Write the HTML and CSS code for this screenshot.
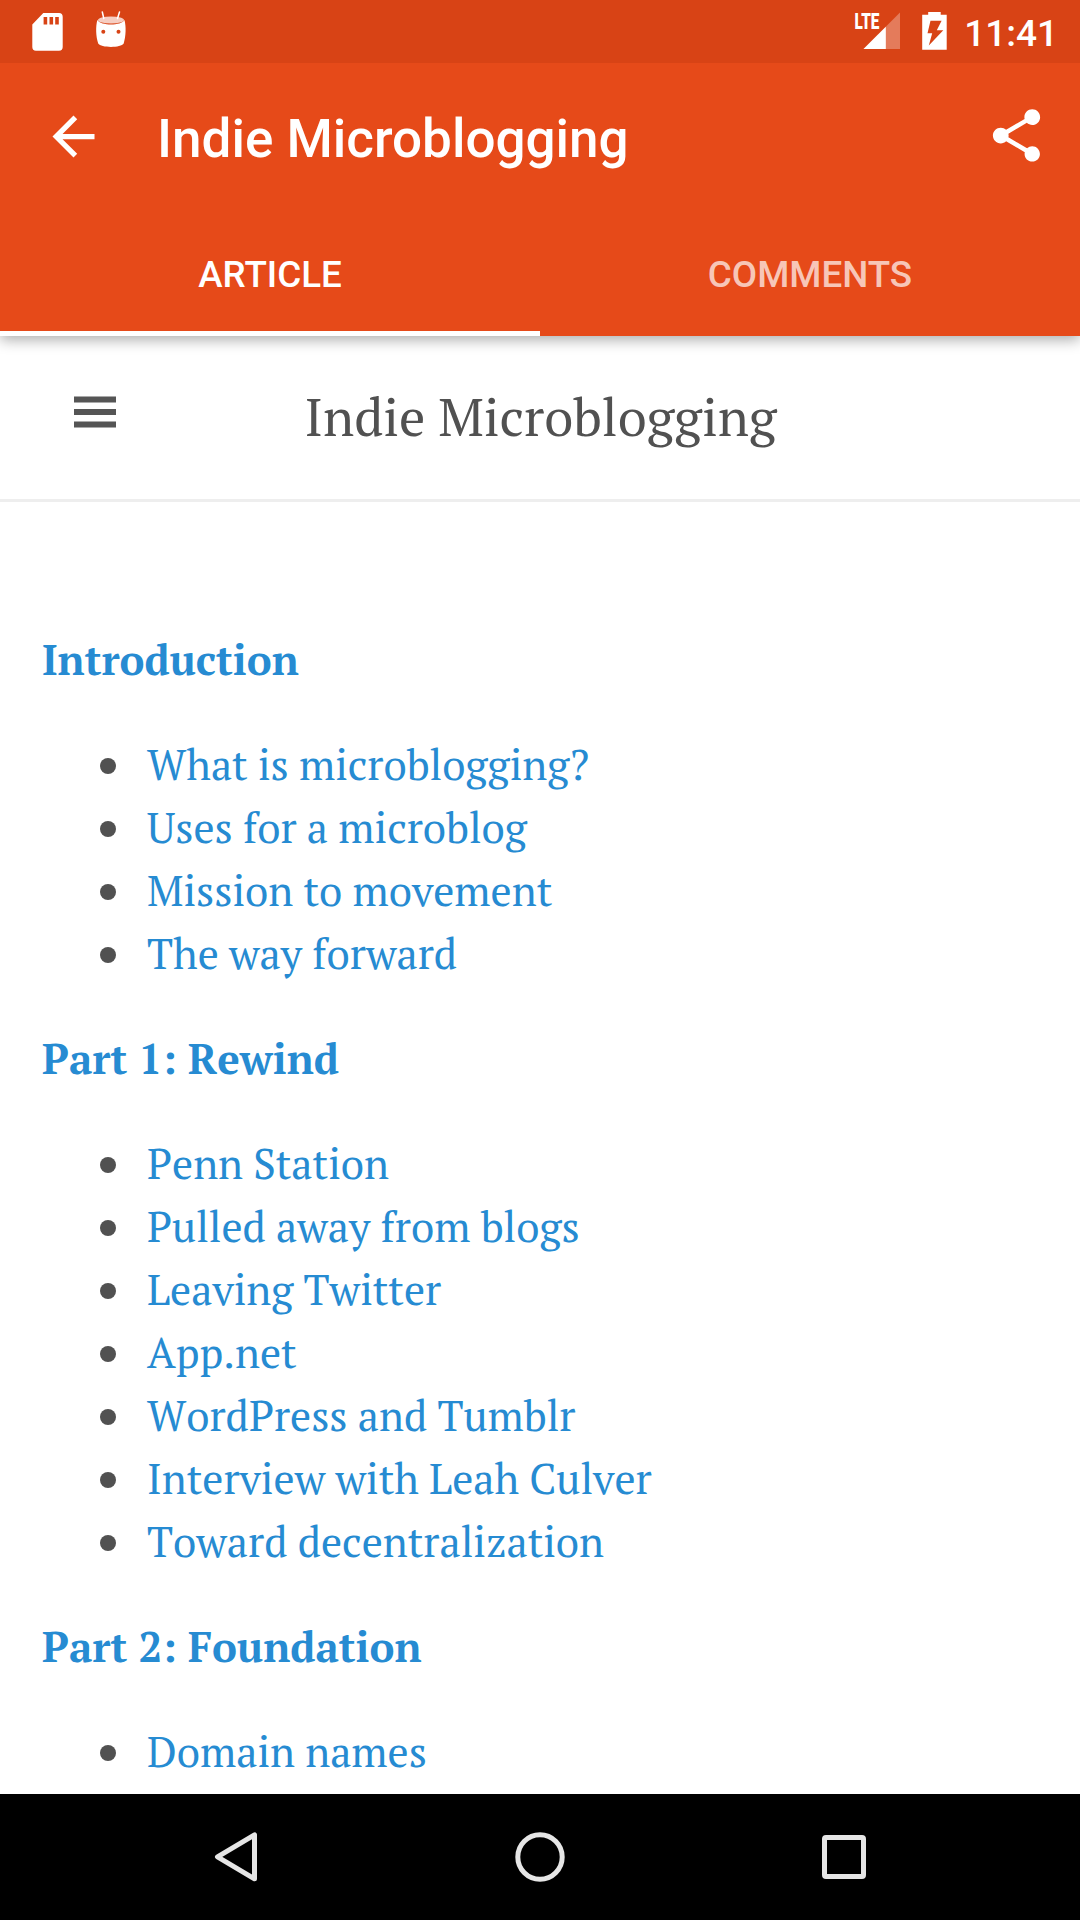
FILE: index.html
```html
<!DOCTYPE html>
<html lang="en">
<head>
<meta charset="utf-8">
<title>Indie Microblogging</title>
<link rel="stylesheet" href="styles.css">
</head>
<body>
<div class="screen">
  <div class="status-bar">
    <div class="status-left">
      <svg width="31" height="38" viewBox="0 0 31 38"><path fill="#fff" fill-rule="evenodd" d="M11.3 0H27a3.800 3.800 0 0 1 3.700 3.800V34a3.800 3.800 0 0 1-3.700 3.800H4A3.800 3.800 0 0 1 .3 34V11.400ZM11.600 3.900v7.500h3.600V3.900ZM17.500 3.900v7.500h3.600V3.900ZM23.200 3.900v7.500h3.600V3.900Z"/></svg>
      <svg class="droid" width="32" height="38" viewBox="0 0 32 38">
        <path fill="#fff" d="M2.300 9C6 15 26 15 29.500 9c1.700 7 1.500 16-.8 23.500C26 37 6 37 3.200 32.500.8 25 .6 16 2.300 9Z"/>
        <ellipse cx="16" cy="9" rx="13" ry="3.600" fill="#f6cdc1"/>
        <path stroke="#fff" stroke-width="1.500" stroke-linecap="round" d="M7.300 1l1.500 6.500M24.500 1l-2 6.500"/>
        <circle cx="8.300" cy="20.700" r="2" fill="#d84315"/><circle cx="23.500" cy="20.700" r="2" fill="#d84315"/>
      </svg>
    </div>
    <div class="status-right">
      <svg class="signal" width="50" height="48" viewBox="-4 -8 50 48">
        <path fill="#fff" fill-opacity=".3" d="M45 .5V37H8.500Z"/>
        <path fill="#fff" d="M30.800 14.700V37H8.500Z"/>
        <text class="lte" x="-.6" y="16.800" textLength="25" lengthAdjust="spacingAndGlyphs">LTE</text>
      </svg>
      <svg class="battery" width="25" height="38" viewBox="0 0 25 38"><path fill="#fff" fill-rule="evenodd" d="M6.200 0h12.500v2.800h6V37.700H.2V2.800h6ZM8.500 8.800 5.500 21.300h4.700L6.800 33.500 21.300 18.300h-6.500L19.600 8.800Z"/></svg>
      <span class="clock">11:41</span>
    </div>
  </div>
  <div class="app-bar">
    <div class="toolbar">
      <svg class="back" width="63" height="63" viewBox="0 0 24 24"><path fill="#fff" d="M20 11H7.830l5.590-5.590L12 4l-8 8 8 8 1.410-1.410L7.830 13H20z"/></svg>
      <h1 class="title">Indie Microblogging</h1>
      <svg class="share" width="63" height="63" viewBox="0 0 24 24"><path fill="#fff" d="M18 16.080c-.76 0-1.440.3-1.960.77L8.910 12.700c.05-.23.09-.46.09-.7s-.04-.47-.09-.7l7.050-4.110c.54.5 1.250.81 2.040.81 1.660 0 3-1.340 3-3s-1.340-3-3-3-3 1.340-3 3c0 .24.04.47.09.7L8.040 9.810C7.500 9.310 6.790 9 6 9c-1.660 0-3 1.340-3 3s1.340 3 3 3c.79 0 1.500-.31 2.040-.81l7.120 4.160c-.05.21-.08.43-.08.65 0 1.610 1.310 2.920 2.920 2.920 1.610 0 2.920-1.310 2.920-2.920s-1.310-2.920-2.920-2.920z"/></svg>
    </div>
    <div class="tabs">
      <div class="tab active">ARTICLE</div>
      <div class="tab">COMMENTS</div>
    </div>
  </div>
  <div class="page">
    <div class="page-head">
      <svg class="menu" width="42" height="32" viewBox="0 0 42 32"><path fill="#555" d="M0 .4h42v6H0zM0 13h42v6H0zM0 25.400h42v6H0z"/></svg>
      <div class="site-title">Indie Microblogging</div>
    </div>
    <div class="toc">
      <h2>Introduction</h2>
      <ul>
        <li>What is microblogging?</li>
        <li>Uses for a microblog</li>
        <li>Mission to movement</li>
        <li>The way forward</li>
      </ul>
      <h2>Part 1: Rewind</h2>
      <ul>
        <li>Penn Station</li>
        <li>Pulled away from blogs</li>
        <li>Leaving Twitter</li>
        <li>App.net</li>
        <li>WordPress and Tumblr</li>
        <li>Interview with Leah Culver</li>
        <li>Toward decentralization</li>
      </ul>
      <h2>Part 2: Foundation</h2>
      <ul>
        <li>Domain names</li>
      </ul>
    </div>
  </div>
  <div class="nav-bar">
    <svg width="50" height="50" viewBox="0 0 50 50"><path fill="none" stroke="#e6e6e6" stroke-width="5" stroke-linejoin="round" d="M43.500 2.800v44L6.500 24.800Z"/></svg>
    <svg width="50" height="50" viewBox="0 0 50 50"><circle cx="25" cy="25" r="22.200" fill="none" stroke="#e6e6e6" stroke-width="5"/></svg>
    <svg width="50" height="50" viewBox="0 0 50 50"><rect x="5.500" y="5.500" width="39" height="39" rx="1.500" fill="none" stroke="#e6e6e6" stroke-width="5"/></svg>
  </div>
</div>
</body>
</html>
```
FILE: styles.css
```css
* { box-sizing: border-box; margin: 0; padding: 0; }
body { background: #fff; }
svg { display: block; flex: none; }

.screen {
  width: 1080px;
  height: 1920px;
  display: flex;
  flex-direction: column;
  overflow: hidden;
  font-family: Roboto, sans-serif;
}

.status-bar {
  flex: none;
  position: relative;
  z-index: 2;
  height: 63px;
  padding: 0 22px 0 32px;
  display: flex;
  justify-content: space-between;
  background: #d84315;
  color: #fff;
}
.status-left { display: flex; padding-top: 12.500px; gap: 32px; }
.droid { margin-top: -1.800px; }
.status-right { display: flex; align-items: flex-start; padding-top: 12.200px; }
.signal { margin-top: -8px; }
.battery { margin: 0 17px 0 21px; }
.lte { font: 900 21.500px Roboto, sans-serif; fill: #fff; }
.clock { font-size: 37px; font-weight: 500; line-height: 43px; }

.app-bar {
  flex: none;
  position: relative;
  height: 273px;
  background: #e64a19;
  color: #fff;
  box-shadow: 0 4px 13px rgba(0, 0, 0, .32);
}
.toolbar {
  height: 147px;
  padding: 0 32px 0 42px;
  display: flex;
  align-items: center;
}
.title {
  flex: 1;
  margin-left: 52px;
  padding-top: 4px;
  font-size: 53px;
  font-weight: 500;
  line-height: 62px;
}
.share { margin-top: -2px; }
.tabs { display: flex; height: 126px; }
.tab {
  flex: 1;
  padding-top: 3px;
  border-bottom: 5px solid transparent;
  font-size: 36.750px;
  font-weight: 500;
  line-height: 123px;
  text-align: center;
  color: rgba(255, 255, 255, .7);
}
.tab.active { color: #fff; border-bottom-color: #fff; }

.page {
  flex: 1;
  overflow: hidden;
  font-family: "PT Serif", "Liberation Serif", serif;
  font-kerning: none;
  color: #515151;
}
.page-head {
  display: grid;
  grid-template-columns: 116px 1fr 115px;
  height: 166px;
  border-bottom: 3px solid #eee;
}
.menu { margin: 60px 0 0 74px; }
.site-title {
  padding-top: 41px;
  font-size: 52.500px;
  line-height: 79px;
  text-align: center;
}
.toc { padding: 126px 42px 0; font-size: 42px; line-height: 63px; }
.toc h2 { font-size: 42px; font-weight: 700; color: #268bd2; }
.toc ul { list-style: none; margin: 42px 0; }
.toc li { display: flex; align-items: center; padding-left: 57.500px; color: #268bd2; }
.toc li::before {
  content: "";
  width: 16px;
  height: 16px;
  margin: 3px 31.500px 0 0;
  border-radius: 50%;
  background: #515151;
}

.nav-bar {
  flex: none;
  height: 126px;
  padding: 0 211px;
  display: flex;
  align-items: center;
  justify-content: space-between;
  background: #000;
}
```
